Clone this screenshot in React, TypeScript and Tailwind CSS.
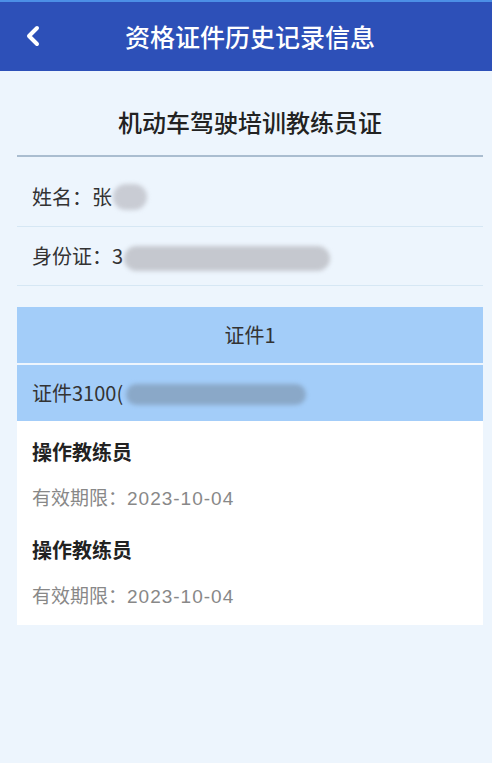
import React from 'react';

const FONT = { fontFamily: '"Noto Sans CJK SC", "Noto Sans", sans-serif' };

interface Qualification {
  name: string;
  validUntil: string;
}

const qualifications: Qualification[] = [
  { name: '操作教练员', validUntil: '2023-10-04' },
  { name: '操作教练员', validUntil: '2023-10-04' },
];

// redacted value, shown as a soft grey smudge
const Blur: React.FC<{ className: string }> = ({ className }) => (
  <span className={`inline-block rounded-full blur-[2px] ${className}`} />
);

export default function App() {
  return (
    <div className="min-h-[763px] w-full bg-[#edf5fd] text-[#222]" style={FONT}>
      {/* Header */}
      <div className="relative h-[71px] border-t-2 border-[#4c8fe6] bg-[#2d50b8] flex items-center justify-center">
        <button className="absolute left-[24px] top-[23px] text-white">
          <svg width="18" height="22" viewBox="0 0 18 22" fill="none">
            <path d="M13 3 L5 11 L13 19" stroke="white" strokeWidth="4" strokeLinecap="round" strokeLinejoin="round" />
          </svg>
        </button>
        <h1 className="text-[25px] font-medium text-white pl-[8px]">资格证件历史记录信息</h1>
      </div>

      <div className="pl-[17px] pr-[9px]">
        <div className="h-[86px] pt-[18px] flex items-center justify-center border-b-2 border-[#aabdd0]">
          <h2 className="text-[24px] font-medium text-[#222]">机动车驾驶培训教练员证</h2>
        </div>

        <div className="h-[70px] pt-[10px] flex items-center pl-[15px] border-b border-[#d6e7f4] text-[20px] text-[#333]">
          <span>姓名：张</span>
          <Blur className="w-[34px] h-[26px] bg-[#c9ccd4] ml-[1px]" />
        </div>
        <div className="h-[59px] flex items-center pl-[15px] border-b border-[#d6e7f4] text-[20px] text-[#333]">
          <span>身份证：3</span>
          <Blur className="w-[206px] h-[25px] bg-[#c5c8cf] ml-[1px] mt-[4px]" />
        </div>

        {/* Certificate card */}
        <div className="mt-[21px] bg-white">
          <div className="h-[56px] bg-[#a3cdf9] flex items-center justify-center text-[20px] text-[#333]">
            证件1
          </div>
          <div className="h-[2px] bg-[#eef5fd]" />
          <div className="h-[56px] bg-[#a3cdf9] flex items-center pl-[15px] text-[20px] text-[#333]">
            <span>证件3100(</span>
            <Blur className="w-[180px] h-[21px] bg-[#8aa8c8] ml-[3px] mt-[2px]" />
          </div>
          <div className="px-[15px] pt-[16px] pb-[14px]">
            {qualifications.map((q, i) => (
              <div key={i} className={i > 0 ? 'mt-[22px]' : ''}>
                <div className="text-[20px] font-bold text-[#222] leading-[30px]">{q.name}</div>
                <div className="mt-[16px] text-[19px] text-[#888] leading-[28px]">
                  有效期限：
                  <span className="tracking-[1px]" style={{ fontFamily: '"Liberation Sans", sans-serif' }}>
                    {q.validUntil}
                  </span>
                </div>
              </div>
            ))}
          </div>
        </div>
      </div>
    </div>
  );
}
